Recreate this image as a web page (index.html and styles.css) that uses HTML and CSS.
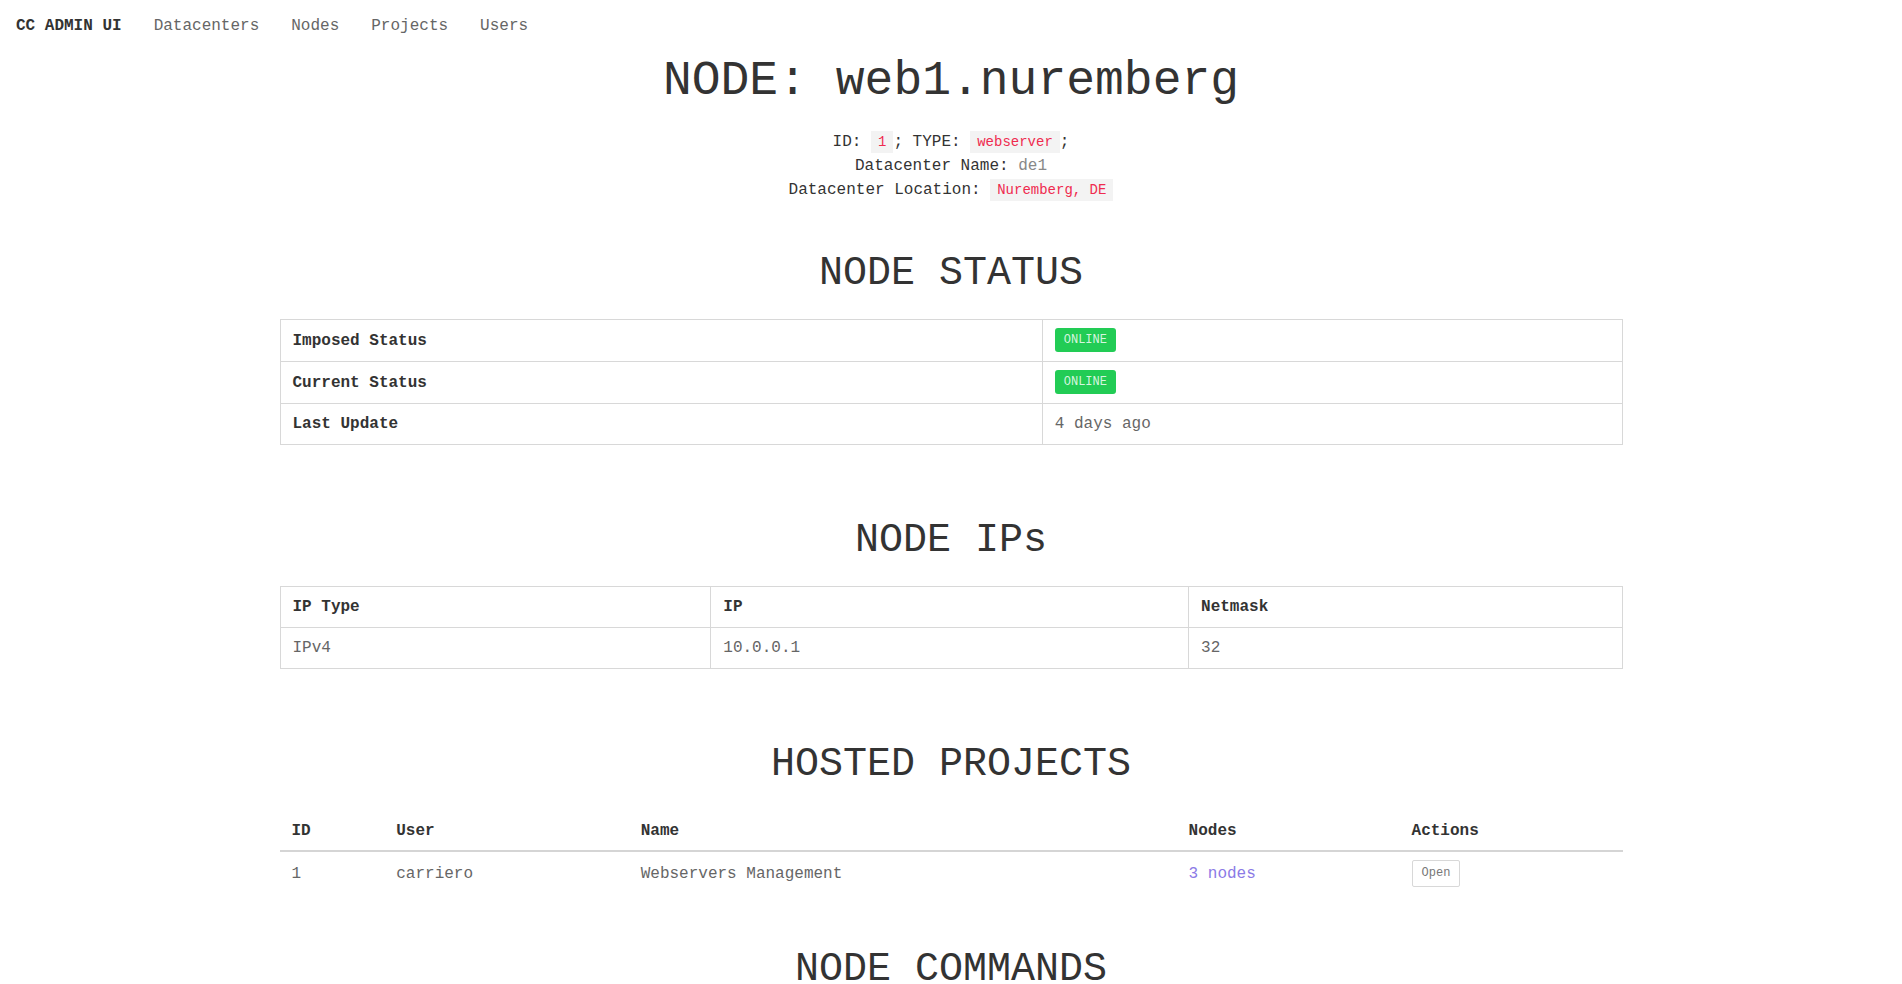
FILE: index.html
```html
<!DOCTYPE html>
<html lang="en">
<head>
<meta charset="utf-8">
<title>CC ADMIN UI - Node web1.nuremberg</title>
<link rel="stylesheet" href="styles.css">
</head>
<body>
<nav class="topnav">
  <a class="brand" href="#">CC ADMIN UI</a>
  <a class="nav-link" href="#">Datacenters</a>
  <a class="nav-link" href="#">Nodes</a>
  <a class="nav-link" href="#">Projects</a>
  <a class="nav-link" href="#">Users</a>
</nav>
<main class="container">
  <h1 class="page-title">NODE: web1.nuremberg</h1>
  <div class="node-meta">
    <p><span class="label">ID:</span> <code>1</code>; <span class="label">TYPE:</span> <code>webserver</code>;</p>
    <p><span class="label">Datacenter Name:</span> <span class="value">de1</span></p>
    <p><span class="label">Datacenter Location:</span> <code>Nuremberg, DE</code></p>
  </div>

  <section class="node-section">
    <h2 class="section-title">NODE STATUS</h2>
    <table class="table table-bordered">
      <colgroup><col class="col-key"><col></colgroup>
      <tbody>
        <tr class="row-badge"><th>Imposed Status</th><td><span class="badge">ONLINE</span></td></tr>
        <tr class="row-badge"><th>Current Status</th><td><span class="badge">ONLINE</span></td></tr>
        <tr><th>Last Update</th><td>4 days ago</td></tr>
      </tbody>
    </table>
  </section>

  <section class="node-section">
    <h2 class="section-title">NODE IPs</h2>
    <table class="table table-bordered">
      <colgroup><col class="col-iptype"><col class="col-ip"><col></colgroup>
      <thead>
        <tr><th>IP Type</th><th>IP</th><th>Netmask</th></tr>
      </thead>
      <tbody>
        <tr><td>IPv4</td><td>10.0.0.1</td><td>32</td></tr>
      </tbody>
    </table>
  </section>

  <section class="node-section">
    <h2 class="section-title">HOSTED PROJECTS</h2>
    <table class="table table-plain">
      <colgroup><col class="col-id"><col class="col-user"><col class="col-name"><col class="col-nodes"><col></colgroup>
      <thead>
        <tr><th>ID</th><th>User</th><th>Name</th><th>Nodes</th><th>Actions</th></tr>
      </thead>
      <tbody>
        <tr>
          <td>1</td>
          <td>carriero</td>
          <td>Webservers Management</td>
          <td><a class="nodes-link" href="#">3 nodes</a></td>
          <td><button class="btn-open" type="button">Open</button></td>
        </tr>
      </tbody>
    </table>
  </section>

  <section class="node-section">
    <h2 class="section-title">NODE COMMANDS</h2>
  </section>
</main>
</body>
</html>
```

FILE: styles.css
```css
html, body {
  margin: 0;
  padding: 0;
  background: #fff;
}

body {
  font-family: "Liberation Mono", "DejaVu Sans Mono", monospace;
  font-size: 16px;
  line-height: 24px;
  color: #333;
}

.topnav {
  display: flex;
  gap: 32px;
  padding: 14px 16px 12px;
}

.topnav a {
  text-decoration: none;
  color: #666;
}

.topnav .brand {
  color: #333;
  font-weight: bold;
}

.container {
  width: 1343px;
  margin: 0 auto;
  display: flex;
  flex-direction: column;
}

.page-title {
  font-size: 48px;
  line-height: 58px;
  font-weight: normal;
  text-align: center;
  margin: 2px 0 0;
  color: #333;
}

.node-meta {
  margin-top: 20px;
  text-align: center;
}

.node-meta p {
  margin: 0;
}

.label {
  color: #333;
}

.value {
  color: #888;
}

code {
  font-family: inherit;
  font-size: 14px;
  padding: 3px 7px;
  background: #f3f3f3;
  color: #ef2b4f;
}

.node-section {
  display: flow-root;
}

.section-title {
  font-size: 40px;
  line-height: 48px;
  font-weight: normal;
  text-align: center;
  margin: 48px 0 21px;
  color: #333;
}

.table {
  width: 100%;
  border-collapse: collapse;
  table-layout: fixed;
}

.table th,
.table td {
  text-align: left;
  padding: 8px 12px;
  vertical-align: middle;
}

.table th {
  color: #333;
  font-weight: bold;
}

.table td {
  color: #666;
}

.table-bordered {
  border: 1px solid #d8d8d8;
  margin-bottom: 24px;
}

.table-bordered th,
.table-bordered td {
  border: 1px solid #d8d8d8;
}

.row-badge > th,
.row-badge > td {
  height: 25px;
}

.col-key { width: 56.8%; }
.col-iptype { width: 32.1%; }
.col-ip { width: 35.6%; }

.table-plain {
  margin-bottom: 3px;
}

.table-plain thead th {
  padding: 9px 12px 7px;
  border-bottom: 2px solid #d5d5d5;
}

.col-id { width: 7.8%; }
.col-user { width: 18.2%; }
.col-name { width: 40.8%; }
.col-nodes { width: 16.6%; }

.badge {
  display: inline-block;
  font-size: 12px;
  line-height: 16px;
  padding: 4px 9px;
  border-radius: 3px;
  background: #22cc55;
  color: rgba(255, 255, 255, 0.82);
  vertical-align: middle;
}

.nodes-link {
  color: #8b7ae6;
  text-decoration: none;
}

.btn-open {
  font-family: inherit;
  font-size: 12px;
  line-height: 15px;
  padding: 5px 9px;
  border: 1px solid #d8d8d8;
  border-radius: 2px;
  background: #fff;
  color: #777;
  vertical-align: middle;
}
```
